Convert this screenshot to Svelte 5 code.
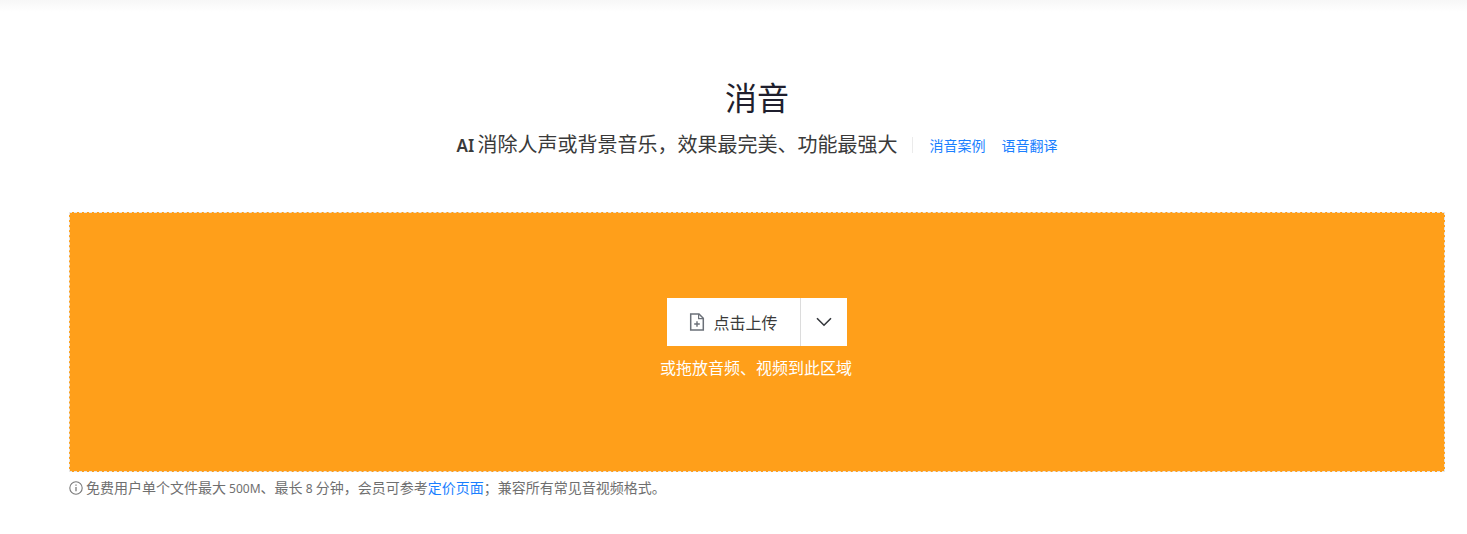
<script>
  const cjk = '消音';
</script>

<div class="page">
  <div class="topshade"></div>
  <main class="content">
    <h1>{cjk}</h1>
    <div class="subtitle">
      <span class="lead"><b>AI</b> 消除人声或背景音乐，效果最完美、功能最强大</span>
      <span class="divider"></span>
      <a href="#a">消音案例</a>
      <a href="#b">语音翻译</a>
    </div>
    <section class="drop">
      <div class="buttons">
        <button class="upload">
          <svg width="16" height="18" viewBox="0 0 16 18" fill="none" stroke="#6b7078" stroke-width="1.5">
            <path d="M1.7 1H10l4.3 4.3V17H1.7z"/>
            <path d="M9.6 1v4.7h4.7" stroke-width="1.2"/>
            <path d="M8 8.2v5.6M5.2 11h5.6" stroke-width="1.4"/>
          </svg>
          <span>点击上传</span>
        </button>
        <button class="more" aria-label="更多">
          <svg width="16" height="10" viewBox="0 0 16 10" fill="none" stroke="#33363b" stroke-width="1.6">
            <path d="M1 1.2l7 7 7-7"/>
          </svg>
        </button>
      </div>
      <p>或拖放音频、视频到此区域</p>
    </section>
    <div class="note">
      <svg width="14" height="14" viewBox="0 0 14 14" fill="none" stroke="#7a7a7a">
        <circle cx="7" cy="7" r="6.2" stroke-width="1.1"/>
        <path d="M7 6v4.2" stroke-width="1.3"/>
        <path d="M7 3.4v1.4" stroke-width="1.3"/>
      </svg>
      <span class="note-text">免费用户单个文件最大<span class="lat">&nbsp;500M</span>、最长<span class="lat">&nbsp;8&nbsp;</span>分钟，会员可参考<a href="#c">定价页面</a>；兼容所有常见音视频格式。</span>
    </div>
  </main>
</div>

<style>
  :global(body) {
    margin: 0;
    background: #fff;
  }
  .page {
    height: 534px;
    overflow: hidden;
    font-family: "Noto Sans", "Noto Sans CJK SC", sans-serif;
  }
  .topshade {
    height: 12px;
    background: linear-gradient(#f7f7f7, #fff);
  }
  .content {
    margin: 0 22px 0 69px;
    display: flex;
    flex-direction: column;
  }
  h1 {
    margin: 64px 0 0;
    height: 44px;
    font-size: 32px;
    line-height: 44px;
    font-weight: 400;
    text-align: center;
    color: #1f1f2e;
  }
  .subtitle {
    margin-top: 10px;
    height: 30px;
    display: flex;
    align-items: center;
    justify-content: center;
  }
  .lead {
    font-size: 20px;
    line-height: 30px;
    word-spacing: -2px;
    color: #3a3a3a;
  }
  .lead b {
    font-weight: 600;
    font-size: 17px;
  }
  .divider {
    width: 1px;
    height: 16px;
    margin: 0 16px 0 15px;
    background: #ebebeb;
  }
  .subtitle a {
    font-size: 14px;
    color: #1a7fff;
    text-decoration: none;
    margin-right: 16px;
  }
  .subtitle a:last-child {
    margin-right: 0;
  }
  .drop {
    box-sizing: border-box;
    height: 260px;
    margin-top: 52px;
    padding-bottom: 6px;
    background: #ff9f1a;
    border: 1px dashed #e6e6e6;
    display: flex;
    flex-direction: column;
    align-items: center;
    justify-content: center;
  }
  .buttons {
    display: flex;
    height: 48px;
    background: #fff;
  }
  button {
    border: 0;
    background: #fff;
    padding: 0;
    display: flex;
    align-items: center;
    justify-content: center;
    font: inherit;
  }
  .upload {
    width: 134px;
    gap: 8px;
    font-size: 16px;
    color: #3a3a3a;
    border-right: 1px solid #dcdcdc;
  }
  .more {
    width: 46px;
  }
  .drop p {
    margin: 10px 2px 0 0;
    font-size: 16px;
    line-height: 24px;
    color: #fff;
  }
  .note {
    margin-top: 4px;
    display: flex;
    align-items: center;
    gap: 3px;
    font-size: 14px;
    line-height: 20px;
    color: #6f6f6f;
  }
  .note-text {
    padding-top: 2px;
  }
  .lat {
    font-size: 12px;
  }
  .note a {
    color: #1a7fff;
    text-decoration: none;
  }
</style>
